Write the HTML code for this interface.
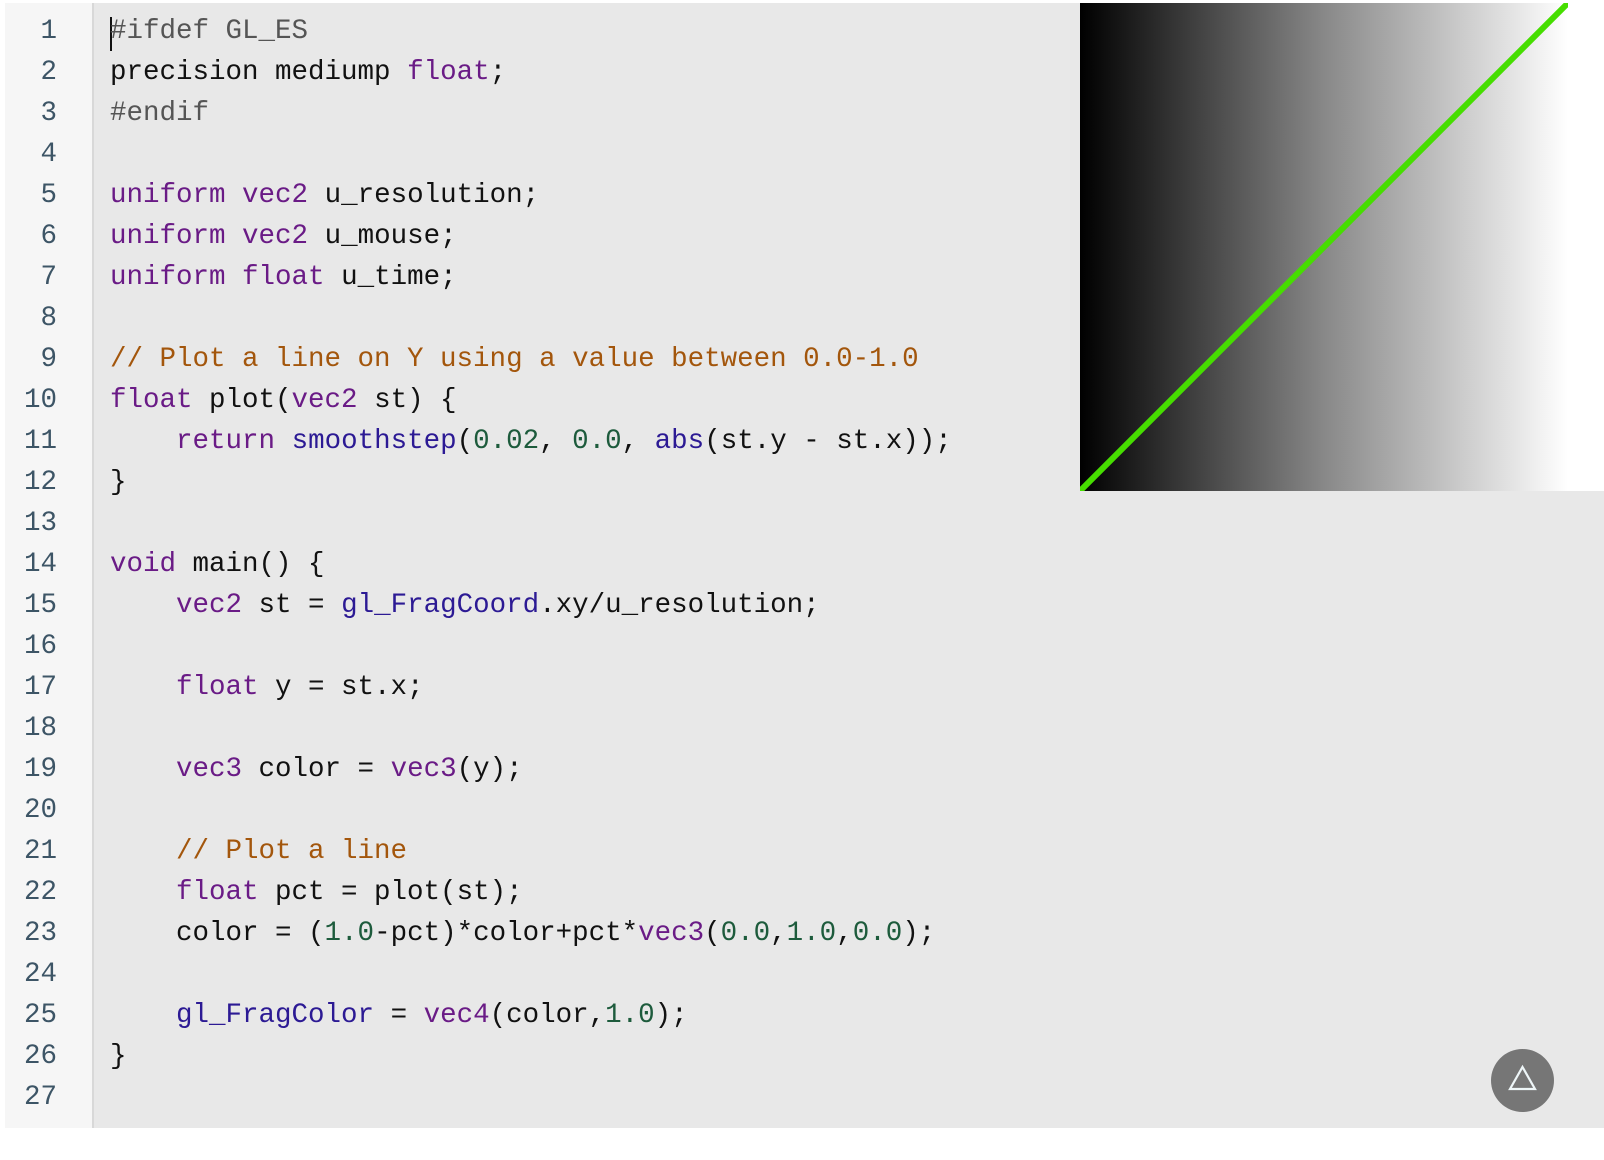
<!DOCTYPE html>
<html><head><meta charset="utf-8"><style>
html,body{margin:0;padding:0;background:#fff;width:1604px;height:1160px;overflow:hidden}
.wrap{position:absolute;left:5px;top:3px;width:1599px;height:1125px;background:#e8e8e8}
.gut{position:absolute;left:0;top:0;width:87px;height:1125px;background:#f6f6f6;border-right:2px solid #d8d8d8}
pre{margin:0;font-family:"Liberation Mono",monospace;font-size:27.5px;line-height:41px}
.nums{position:absolute;left:0;top:8px;width:52px;text-align:right;color:#3d5566}
.code{position:absolute;left:105px;top:8px;color:#111}
.k{color:#6a1b86}.b{color:#2c1a94}.n{color:#1d5b3c}.c{color:#a3560c}.p{color:#555}
.cur{position:absolute;left:105px;top:14px;width:2px;height:34px;background:#111}
.cv{position:absolute;left:1080px;top:3px;width:524px;height:488px;background:linear-gradient(to right,#000 0,#888 244px,#fff 488px,#fff 524px)}
.fab{position:absolute;left:1491px;top:1049px;width:63px;height:63px;border-radius:50%;background:#767676}
</style></head><body>
<div class="wrap"><div class="gut"></div>
<pre class="nums">1
2
3
4
5
6
7
8
9
10
11
12
13
14
15
16
17
18
19
20
21
22
23
24
25
26
27</pre>
<div class="cur"></div>
<pre class="code"><span class="p">#ifdef GL_ES</span>
precision mediump <span class="k">float</span>;
<span class="p">#endif</span>

<span class="k">uniform</span> <span class="k">vec2</span> u_resolution;
<span class="k">uniform</span> <span class="k">vec2</span> u_mouse;
<span class="k">uniform</span> <span class="k">float</span> u_time;

<span class="c">// Plot a line on Y using a value between 0.0-1.0</span>
<span class="k">float</span> plot(<span class="k">vec2</span> st) {
    <span class="k">return</span> <span class="b">smoothstep</span>(<span class="n">0.02</span>, <span class="n">0.0</span>, <span class="b">abs</span>(st.y - st.x));
}

<span class="k">void</span> main() {
    <span class="k">vec2</span> st = <span class="b">gl_FragCoord</span>.xy/u_resolution;

    <span class="k">float</span> y = st.x;

    <span class="k">vec3</span> color = <span class="k">vec3</span>(y);

    <span class="c">// Plot a line</span>
    <span class="k">float</span> pct = plot(st);
    color = (<span class="n">1.0</span>-pct)*color+pct*<span class="k">vec3</span>(<span class="n">0.0</span>,<span class="n">1.0</span>,<span class="n">0.0</span>);

    <span class="b">gl_FragColor</span> = <span class="k">vec4</span>(color,<span class="n">1.0</span>);
}
</pre></div>
<div class="cv"><svg width="488" height="488" style="position:absolute;left:0;top:0"><line x1="0" y1="488" x2="488" y2="0" stroke="#46de00" stroke-width="6"/></svg></div>
<div class="fab"><svg width="63" height="63"><polygon points="31.5,18 44,40 19,40" fill="none" stroke="#eef6f8" stroke-width="2.2"/></svg></div>
</body></html>
